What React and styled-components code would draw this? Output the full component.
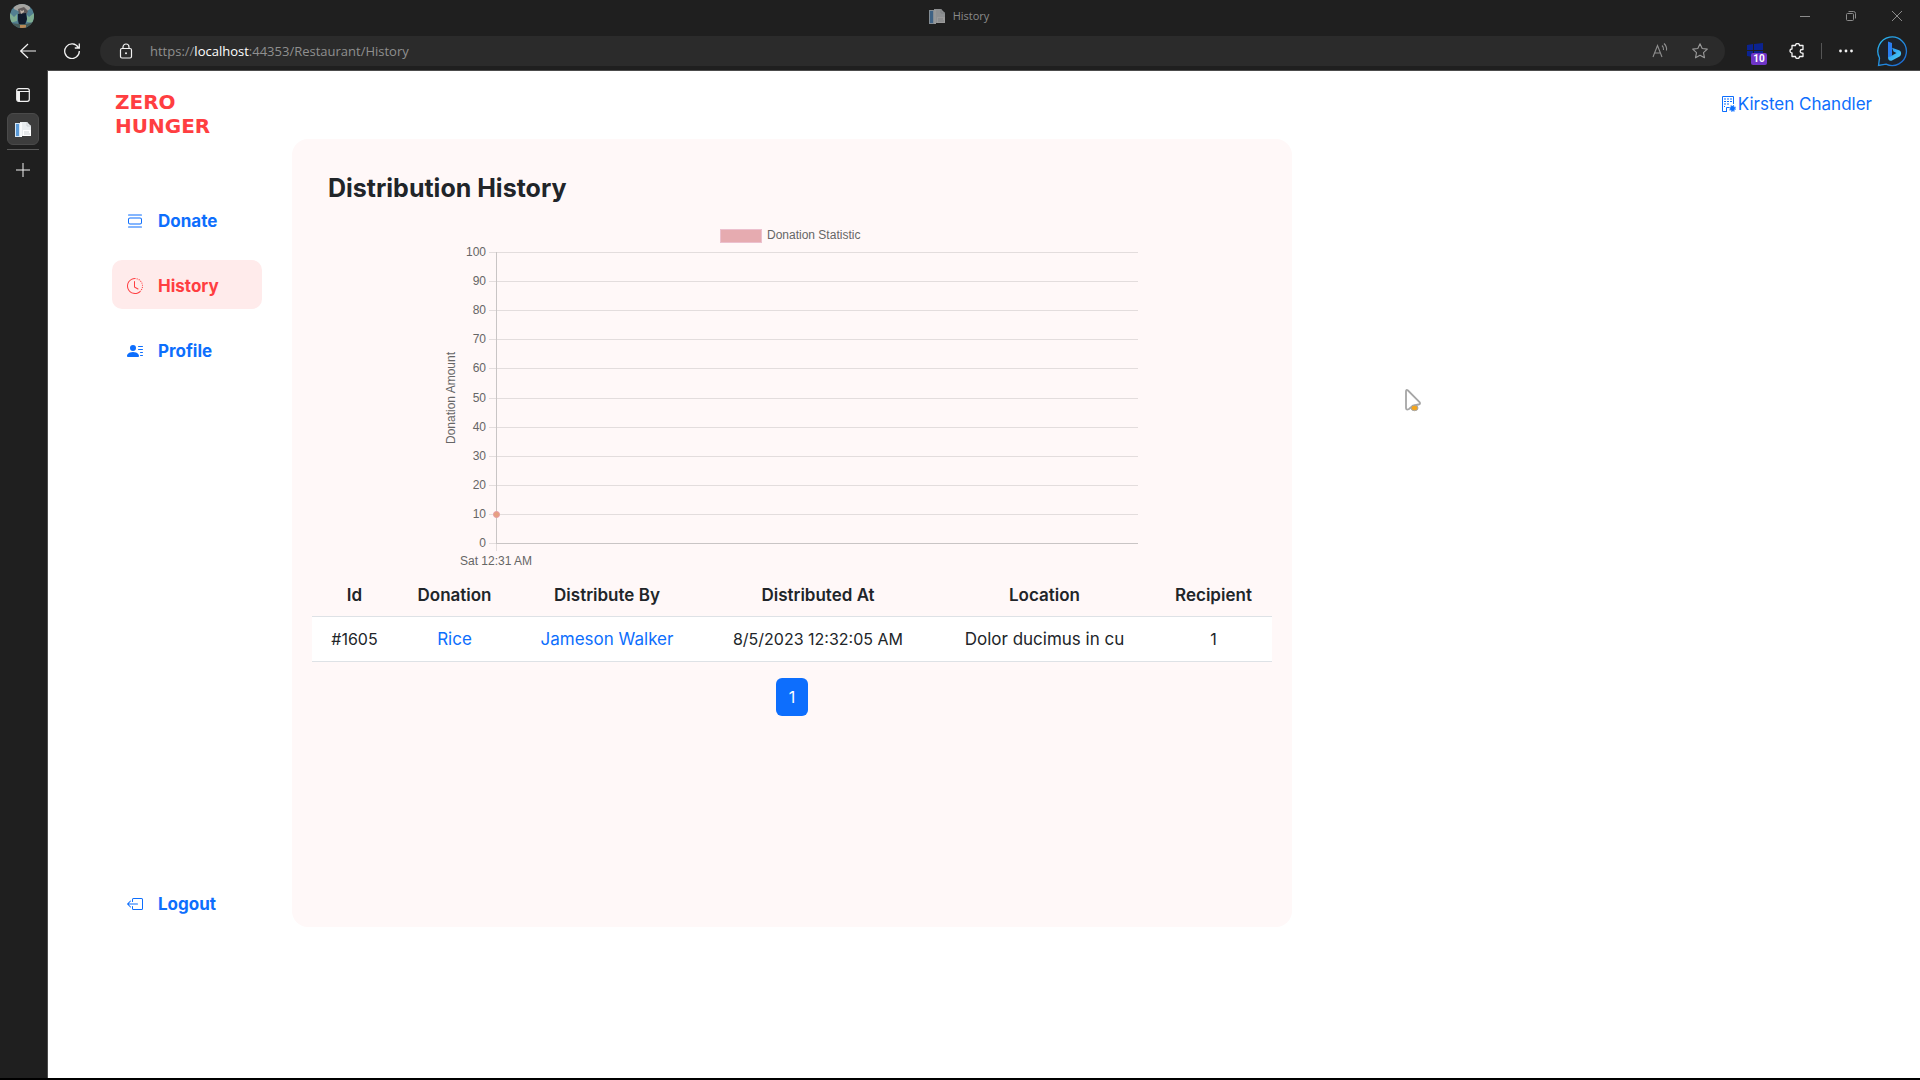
import React from "react";
import styled, { createGlobalStyle } from "styled-components";
import {
  BsViewList,
  BsClockHistory,
  BsPersonLinesFill,
  BsBoxArrowLeft,
} from "react-icons/bs";

const GlobalStyle = createGlobalStyle`
  *, *::before, *::after { box-sizing: border-box; }
  body {
    margin: 0;
    background: #fff;
    color: #212529;
    font-family: Inter, "Noto Sans", sans-serif;
    font-size: 17px;
    line-height: 24px;
  }
  a { color: #0d6efd; text-decoration: none; }
  button { font: inherit; color: inherit; border: 0; padding: 0; background: none; }
`;

const Browser = styled.div`
  min-height: 100vh;
  display: flex;
  flex-direction: column;
  background: #1f1f1f;
  border-bottom: 2px solid #000;
`;

const TitleBar = styled.header`
  height: 32px;
  display: grid;
  grid-template-columns: 1fr auto 1fr;
  align-items: center;
  padding-left: 10px;
  font: 11px/16px "Open Sans", sans-serif;
  color: #8b8b8b;
`;

const TabTitle = styled.div`
  display: flex;
  align-items: center;
  gap: 8px;
  padding-right: 12px;
`;

const Dimmed = styled.span`
  display: flex;
  opacity: 0.55;
`;

const WindowControls = styled.div`
  display: flex;
  justify-content: flex-end;
`;

const IconButton = styled.button`
  width: ${(p) => p.$w || 32}px;
  height: 32px;
  flex: none;
  display: flex;
  align-items: center;
  justify-content: center;
  border-radius: 6px;
  color: ${(p) => p.$color || "#f2f2f2"};
  ${(p) => p.$active && "background: #3d3d3d; border: 1px solid #4a4a4a;"}
`;

const Toolbar = styled.div`
  height: 38px;
  display: flex;
  align-items: center;
  padding: 0 8px 0 12px;
  gap: 12px;
`;

const AddressBar = styled.form`
  flex: 1;
  height: 30px;
  display: flex;
  align-items: center;
  border-radius: 15px;
  background: #2b2b2b;
  padding: 0 9px 0 10px;
  gap: 8px;
`;

const Address = styled.div`
  flex: 1;
  font: 13px/20px "Open Sans", sans-serif;
  color: #8f8f8f;
  b { font-weight: 400; color: #fff; }
`;

const ToolGroup = styled.div`
  display: flex;
  align-items: center;
  gap: 8px;
`;

const Divider = styled.span`
  width: 1px;
  height: 16px;
  background: #555;
`;

const Extension = styled.button`
  position: relative;
  width: 36px;
  height: 32px;
  display: flex;
  align-items: center;
  justify-content: center;
`;

const Badge = styled.span`
  position: absolute;
  right: 6px;
  bottom: 2px;
  width: 16px;
  height: 12px;
  border-radius: 2px;
  background: #6f35c8;
  color: #fff;
  font: bold 10px/12px Roboto, sans-serif;
  text-align: center;
`;

const Body = styled.div`
  flex: 1;
  display: flex;
`;

const TabRail = styled.aside`
  width: 47px;
  display: flex;
  flex-direction: column;
  align-items: center;
  gap: 2px;
  padding: 9px 1px 0 0;
`;

const RailLine = styled.span`
  width: 32px;
  height: 1px;
  margin: 2px 0;
  background: #5a5a5a;
`;

const Page = styled.main`
  flex: 1;
  background: #fff;
  border-top: 1px solid #4c4c4c;
  border-left: 1px solid #4c4c4c;
  display: grid;
  grid-template-columns: 244px minmax(0, 1000px) 1fr;
  align-items: start;
`;

const Side = styled.div`
  height: 856px;
  display: flex;
  flex-direction: column;
  padding: 19px 30px 0 64px;
`;

const Logo = styled.a`
  padding-left: 3px;
  font: bold 20px/24px "DejaVu Sans", sans-serif;
  color: #ff3e41;
`;

const Nav = styled.nav`
  flex: 1;
  display: flex;
  flex-direction: column;
  gap: 16px;
  margin-top: 57px;
`;

const NavItem = styled.a`
  height: 49px;
  display: flex;
  align-items: center;
  gap: 15px;
  padding: 2px 15px 0;
  border-radius: 10px;
  font-weight: 700;
  ${(p) => p.$active && "background: #ffebeb; color: #ff3e41;"}
  ${(p) => p.$last && "margin-top: auto;"}
  svg { width: 16px; height: 16px; flex: none; }
`;

const Card = styled.section`
  min-height: 788px;
  margin-top: 68px;
  padding: 33px 20px 32px;
  border-radius: 16px;
  background: #fff8f8;
`;

const Title = styled.h1`
  margin: 0 16px 16px;
  font-size: 25px;
  line-height: 32px;
  font-weight: 700;
`;

const Chart = styled.svg`
  display: block;
  margin: 0 auto;
  max-width: 100%;
  font: 12px "Liberation Sans", Arial, sans-serif;
`;

const Table = styled.table`
  width: 100%;
  table-layout: fixed;
  border-collapse: collapse;
  margin-top: 4px;
  text-align: center;
`;

const Col = styled.col`
  width: ${(p) => p.$w}px;
`;

const Th = styled.th`
  height: 42px;
  padding: 0;
  font-weight: 600;
  border-bottom: 1px solid #dee2e6;
`;

const Td = styled.td`
  height: 45px;
  padding: 0;
  background: #fff;
  border-bottom: 1px solid #dee2e6;
  ${(p) => p.$numeric && "font-size: 16px;"}
`;

const Pager = styled.div`
  display: flex;
  justify-content: center;
  margin-top: 16px;
`;

const PageButton = styled.button`
  width: 32px;
  height: 38px;
  border-radius: 6px;
  background: #0d6efd;
  color: #fff;
  font-size: 16px;
`;

const Account = styled.div`
  display: flex;
  justify-content: flex-end;
  padding: 21px 48px 0 0;
`;

const AccountLink = styled.a`
  display: flex;
  align-items: center;
  gap: 2px;
`;

const Pointer = styled.svg`
  position: absolute;
  left: 1404px;
  top: 388px;
`;

const Svg = ({ size = 16, children, ...rest }) => (
  <svg width={size} height={size} viewBox={`0 0 ${size} ${size}`} fill="none" stroke="currentColor" {...rest}>
    {children}
  </svg>
);

const Favicon = () => (
  <Svg stroke="none">
    <path d="M5 1h7l4 4v10H5z" fill="#e9edf0" />
    <path d="M0 2h6v14H0z" fill="#d5e6f5" />
    <path d="M1 3h3v12H1z" fill="#5a9ad8" />
    <path d="M5 2h2v14H5z" fill="#f8fafb" />
    <path d="M8 9h8v6H8z" fill="#fff" />
    <path d="M9 11h5M9 13h6M12 1v4h4" stroke="#ccd1d5" />
  </Svg>
);

const Avatar = () => (
  <Svg size={24} stroke="none">
    <clipPath id="avatar"><circle cx="12" cy="12" r="12" /></clipPath>
    <g clipPath="url(#avatar)">
      <path d="M0 0h24v24H0z" fill="#527f91" />
      <path d="M0 9l4 4 3-3v7l-7 2zM24 9l-5 4-2-2v7l7 1z" fill="#7fae92" />
      <path d="M3 0h17v5l-3 2H8L4 5z" fill="#a5a4a0" />
      <path d="M8 5l6-2 4 4-2 4H9z" fill="#625c5c" />
      <path d="M8 10l8-1 1 6-2 6H9l-1-5z" fill="#111b2d" />
      <path d="M10 6l2 1 2-1v2l-3 2z" fill="#bfb3a9" />
      <path d="M0 19l9 1h7l8-2v6H0z" fill="#465a57" />
      <path d="M10 21h6v3h-6z" fill="#b88958" />
    </g>
  </Svg>
);

const BuildingGear = () => (
  <Svg>
    <path d="M7 15.500H2.500V.5h11V8M6.500 15v-3.500H9" />
    <path d="M4 3h2M7 3h2M10 3h2M4 5.500h2M7 5.500h2M10 5.500h2M4 8h2M7 8h2M4 10.500h1" />
    <circle cx="12.500" cy="12.500" r="2.400" fill="currentColor" stroke="none" />
    <circle cx="12.500" cy="12.500" r="2.700" strokeWidth="1.400" strokeDasharray="1.060 1.060" />
  </Svg>
);

const Bing = () => (
  <Svg size={32} stroke="none">
    <defs>
      <linearGradient id="ring" x1="0" y1="0" x2="1" y2="1">
        <stop offset="0" stopColor="#2cbcf0" />
        <stop offset="1" stopColor="#1a62d0" />
      </linearGradient>
      <linearGradient id="bee" x1="0" y1="0" x2="1" y2="1">
        <stop offset="0" stopColor="#1e8cf0" />
        <stop offset="1" stopColor="#55d6f5" />
      </linearGradient>
    </defs>
    <path d="M1.500 30.500L2.500 23A14.300 14.300 0 1 1 9 29.200z" fill="#1c222c" stroke="url(#ring)" strokeWidth="1.300" />
    <path d="M11 6.500l4 1.600v12.400l-4 3z" fill="#2a7df0" />
    <path d="M11 22.500l4-2 4.500-2.500-3-1.500-1.500-3.700 7 2.500c3 1.200 2.500 5 .5 6.200L15 25.500c-2 1-4-.5-4-3z" fill="url(#bee)" />
  </Svg>
);

const columns = [
  ["Id", 85],
  ["Donation", 115],
  ["Distribute By", 190],
  ["Distributed At", 232],
  ["Location", 221],
  ["Recipient", 117],
];

const ticks = [100, 90, 80, 70, 60, 50, 40, 30, 20, 10, 0];
const yOf = (v) => Math.round(323 - v * 2.91) + 0.5;

const DonationChart = () => (
  <Chart width="700" height="350" viewBox="0 0 700 350" role="img" aria-label="Donation Statistic">
    <rect x="278.500" y="9.500" width="41" height="13" fill="#e6abb0" stroke="#ecc0ce" />
    <text x="325" y="19" fill="#666">Donation Statistic</text>
    {ticks.map((v) => (
      <g key={v}>
        <path d={`M47 ${yOf(v)}H696`} stroke="#e3dddd" />
        <text x="44" y={yOf(v) + 3} textAnchor="end" fill="#666">{v}</text>
      </g>
    ))}
    <path d="M54.500 32V324M54.500 323.500H696" stroke="#c9c5c5" />
    <path d="M54.500 324v7" stroke="#e3dddd" />
    <circle cx="54.500" cy={yOf(10)} r="3" fill="#e6a080" stroke="#e79aa5" />
    <text x="54" y="345" textAnchor="middle" fill="#666">Sat 12:31 AM</text>
    <text transform="translate(13 178) rotate(-90)" textAnchor="middle" fill="#666">Donation Amount</text>
  </Chart>
);

export default function App() {
  return (
    <Browser>
      <GlobalStyle />
      <TitleBar>
        <Avatar />
        <TabTitle><Dimmed><Favicon /></Dimmed>History</TabTitle>
        <WindowControls>
          <IconButton $w={46} $color="#8b8b8b" aria-label="Minimize"><Svg size={10}><path d="M0 5.500h10" /></Svg></IconButton>
          <IconButton $w={46} $color="#8b8b8b" aria-label="Restore"><Svg size={10}><rect x=".5" y="2.500" width="7" height="7" rx="1" /><path d="M2.500.5h5a2 2 0 0 1 2 2v5" /></Svg></IconButton>
          <IconButton $w={46} $color="#8b8b8b" aria-label="Close"><Svg size={10}><path d="M0 0l10 10M10 0L0 10" /></Svg></IconButton>
        </WindowControls>
      </TitleBar>
      <Toolbar>
        <IconButton aria-label="Back"><Svg><path d="M16 8H.7M8 1L.7 8 8 15" strokeWidth="1.200" /></Svg></IconButton>
        <IconButton aria-label="Refresh"><Svg><path d="M14.300 4.500A7.300 7.300 0 1 0 15.300 8M15.300.5v4.500h-4.500" strokeWidth="1.300" /></Svg></IconButton>
        <AddressBar onSubmit={(e) => e.preventDefault()}>
          <IconButton type="button" aria-label="Site information"><Svg><rect x="2.500" y="5.500" width="11" height="9.500" rx="1.500" strokeWidth="1.200" /><path d="M5 5.500V4a3 3 0 0 1 6 0v1.500" strokeWidth="1.200" /><circle cx="8" cy="10.300" r="1" fill="currentColor" stroke="none" /></Svg></IconButton>
          <Address>https://<b>localhost</b>:44353/Restaurant/History</Address>
          <ToolGroup>
            <IconButton type="button" $color="#8f8f8f" aria-label="Read aloud"><Svg><path d="M1 14L5.500 2.500 10 14M2.700 10h5.600M10 2.500a5 5 0 0 1 1.500 4.500M12 .5a8 8 0 0 1 2.500 7" strokeWidth="1.100" /></Svg></IconButton>
            <IconButton type="button" $color="#9a9a9a" aria-label="Add to favorites"><Svg><path d="M8 .8l2.200 4.700 5.100.6-3.800 3.500 1 5.200L8 12.300l-4.500 2.500 1-5.200L.7 6.100l5.100-.6z" strokeWidth="1.100" strokeLinejoin="round" /></Svg></IconButton>
          </ToolGroup>
        </AddressBar>
        <ToolGroup>
          <Extension aria-label="Extension, 10">
            <Svg stroke="none"><path d="M0 2l6-1v6H0zM7 1l9-1v7H7zM0 8h6v6l-6-1zM7 8h9v7l-9-1z" fill="#0b2390" /></Svg>
            <Badge>10</Badge>
          </Extension>
          <IconButton aria-label="Extensions"><Svg><path d="M3 2.500h3.500a2 2 0 0 1 4 0h3.500v4h-1a1.800 1.800 0 0 0 0 3.600h1v3.400h-3.500a2 2 0 0 1-4 0H3V10a2 2 0 0 1 0-4z" strokeWidth="1.300" strokeLinejoin="round" /></Svg></IconButton>
          <Divider />
          <IconButton aria-label="Settings and more"><Svg stroke="none" fill="currentColor"><circle cx="2.500" cy="8" r="1.400" /><circle cx="8" cy="8" r="1.400" /><circle cx="13.500" cy="8" r="1.400" /></Svg></IconButton>
        </ToolGroup>
        <IconButton $w={38} aria-label="Bing"><Bing /></IconButton>
      </Toolbar>
      <Body>
        <TabRail>
          <IconButton aria-label="Tab actions"><Svg size={14}><rect x=".7" y=".7" width="12.600" height="12.600" rx="2" strokeWidth="1.200" /><path d="M1 3.500h12.500" /><path d="M1 3h3v10H2l-1-1z" fill="currentColor" stroke="none" /></Svg></IconButton>
          <IconButton $active aria-label="History tab"><Favicon /></IconButton>
          <RailLine />
          <IconButton aria-label="New tab"><Svg size={14}><path d="M7 0v14M0 7h14" /></Svg></IconButton>
        </TabRail>
        <Page>
          <Side>
            <Logo href="#">ZERO<br />HUNGER</Logo>
            <Nav>
              <NavItem href="#donate"><BsViewList />Donate</NavItem>
              <NavItem href="#history" $active aria-current="page"><BsClockHistory />History</NavItem>
              <NavItem href="#profile"><BsPersonLinesFill />Profile</NavItem>
              <NavItem href="#logout" $last><BsBoxArrowLeft />Logout</NavItem>
            </Nav>
          </Side>
          <Card>
            <Title>Distribution History</Title>
            <DonationChart />
            <Table>
              <colgroup>{columns.map(([name, w]) => <Col key={name} $w={w} />)}</colgroup>
              <thead><tr>{columns.map(([name]) => <Th key={name} scope="col">{name}</Th>)}</tr></thead>
              <tbody>
                <tr>
                  <Td $numeric>#1605</Td>
                  <Td><a href="#rice">Rice</a></Td>
                  <Td><a href="#jameson">Jameson Walker</a></Td>
                  <Td $numeric>8/5/2023 12:32:05 AM</Td>
                  <Td>Dolor ducimus in cu</Td>
                  <Td $numeric>1</Td>
                </tr>
              </tbody>
            </Table>
            <Pager><PageButton aria-current="page">1</PageButton></Pager>
          </Card>
          <Account><AccountLink href="#account"><BuildingGear />Kirsten Chandler</AccountLink></Account>
        </Page>
      </Body>
      <Pointer width="20" height="26" viewBox="0 0 20 26" aria-hidden="true">
        <path d="M2 3.500Q2 1 4 2.500L15.500 14Q17 16 14.500 16.500L9 17.500 5 21Q2 22.500 2 20z" fill="#fff" stroke="#a6a6a6" strokeWidth="1.800" />
        <ellipse cx="10.500" cy="20" rx="3.500" ry="2.700" fill="#f5a51a" stroke="#a6a6a6" />
      </Pointer>
    </Browser>
  );
}
